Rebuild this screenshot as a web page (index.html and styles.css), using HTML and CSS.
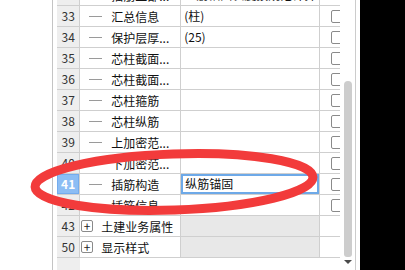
FILE: index.html
```html
<!DOCTYPE html>
<html lang="zh">
<head>
    <meta charset="UTF-8">
    <title>属性编辑器</title>
    <link rel="stylesheet" href="styles.css">
</head>
<body>
    <div class="screen">
        <div class="panel">
            <div class="gutter"></div>
            <div class="pad"></div>
            <div class="grid">
                <div class="row">
                    <div class="num">32</div>
                    <div class="name"><span class="branch"></span>插筋上部...</div>
                    <div class="val">纵筋锚固长度按规范计算...</div>
                    <div class="chk"></div>
                </div>
                <div class="row">
                    <div class="num">33</div>
                    <div class="name"><span class="branch"></span>汇总信息</div>
                    <div class="val">(柱)</div>
                    <div class="chk"><span class="box"></span></div>
                </div>
                <div class="row">
                    <div class="num">34</div>
                    <div class="name"><span class="branch"></span>保护层厚...</div>
                    <div class="val">(25)</div>
                    <div class="chk"><span class="box"></span></div>
                </div>
                <div class="row">
                    <div class="num">35</div>
                    <div class="name"><span class="branch"></span>芯柱截面...</div>
                    <div class="val"></div>
                    <div class="chk"><span class="box"></span></div>
                </div>
                <div class="row">
                    <div class="num">36</div>
                    <div class="name"><span class="branch"></span>芯柱截面...</div>
                    <div class="val"></div>
                    <div class="chk"><span class="box"></span></div>
                </div>
                <div class="row">
                    <div class="num">37</div>
                    <div class="name"><span class="branch"></span>芯柱箍筋</div>
                    <div class="val"></div>
                    <div class="chk"><span class="box"></span></div>
                </div>
                <div class="row">
                    <div class="num">38</div>
                    <div class="name"><span class="branch"></span>芯柱纵筋</div>
                    <div class="val"></div>
                    <div class="chk"><span class="box"></span></div>
                </div>
                <div class="row">
                    <div class="num">39</div>
                    <div class="name"><span class="branch"></span>上加密范...</div>
                    <div class="val"></div>
                    <div class="chk"><span class="box"></span></div>
                </div>
                <div class="row">
                    <div class="num">40</div>
                    <div class="name"><span class="branch"></span>下加密范...</div>
                    <div class="val"></div>
                    <div class="chk"><span class="box"></span></div>
                </div>
                <div class="row">
                    <div class="num selected">41</div>
                    <div class="name"><span class="branch"></span>插筋构造</div>
                    <div class="val edit">纵筋锚固</div>
                    <div class="chk"><span class="box"></span></div>
                </div>
                <div class="row">
                    <div class="num">42</div>
                    <div class="name"><span class="branch"></span>插筋信息</div>
                    <div class="val"></div>
                    <div class="chk"><span class="box"></span></div>
                </div>
                <div class="row">
                    <div class="num">43</div>
                    <div class="name"><span class="plus">+</span>土建业务属性</div>
                    <div class="val shaded"></div>
                    <div class="chk"></div>
                </div>
                <div class="row">
                    <div class="num">50</div>
                    <div class="name"><span class="plus">+</span>显示样式</div>
                    <div class="val shaded"></div>
                    <div class="chk"></div>
                </div>
                <div class="filler">
                    <div class="num"></div>
                </div>
            </div>
            <div class="scroll">
                <div class="thumb"></div>
                <div class="arrow"></div>
            </div>
            <div class="edge"></div>

            <svg class="mark" width="360" height="270" viewBox="0 0 360 270">
                <ellipse cx="174" cy="182" rx="139" ry="28" fill="none" stroke="#f23b3b" stroke-width="9" transform="rotate(-2 174 182)"/>
            </svg>
        </div>
        <div class="outside"></div>
    </div>
</body>
</html>
```

FILE: styles.css
```css
* {
    margin: 0;
    padding: 0;
    box-sizing: border-box;
}

body {
    background: #000;
    font-family: "Noto Sans CJK SC", "Noto Sans", sans-serif;
    font-size: 12px;
    color: #111;
    overflow: hidden;
}

.screen {
    display: flex;
    width: 405px;
    height: 270px;
}

.panel {
    position: relative;
    display: flex;
    width: 360px;
    height: 270px;
    background: #fff;
    overflow: hidden;
}

.outside {
    flex: 1;
    background: #000;
}

.gutter {
    width: 54px;
    border-right: 1px solid #c4c4c4;
}

.pad {
    width: 4px;
}

.grid {
    display: flex;
    flex-direction: column;
    width: 283px;
    height: 285px;
    margin-top: -15px;
}

.row {
    display: flex;
    height: 21px;
    border-bottom: 1px solid #cfcfcf;
}

.num {
    width: 23px;
    border-right: 1px solid #cfcfcf;
    background: #eeeeee;
    color: #333;
    text-align: center;
    line-height: 20px;
}

.num.selected {
    background: #8cbdf4;
    box-shadow: inset 0 0 0 1px #74acee;
    color: #fff;
    font-weight: bold;
}

.name {
    display: flex;
    align-items: center;
    width: 101px;
    border-right: 1px solid #cfcfcf;
    white-space: nowrap;
    overflow: hidden;
}

.branch {
    width: 13px;
    height: 1px;
    margin: 0 9px 0 9px;
    background: #9a9a9a;
}

.plus {
    display: flex;
    align-items: center;
    justify-content: center;
    width: 12px;
    height: 12px;
    margin: 0 8px 0 1px;
    border: 1px solid #8a8a8a;
    border-radius: 2px;
    font-size: 12px;
    line-height: 1;
    color: #222;
}

.val {
    width: 139px;
    padding-left: 3px;
    border-right: 1px solid #cfcfcf;
    line-height: 20px;
    white-space: nowrap;
    overflow: hidden;
}

.val.edit {
    box-shadow: inset 0 0 0 2px #6da9e8;
    padding-left: 4px;
}

.val.shaded {
    background: #e8e8e8;
}

.chk {
    width: 20px;
    overflow: hidden;
}

.box {
    display: block;
    width: 14px;
    height: 13px;
    margin: 4px 0 0 11px;
    border: 1px solid #8a8a8a;
    border-radius: 2px;
}

.filler {
    flex: 1;
    display: flex;
}

.filler .num {
    border-right: none;
}

.scroll {
    display: flex;
    flex-direction: column;
    align-items: center;
    width: 14px;
    padding-top: 81px;
    margin-left: 1px;
}

.thumb {
    width: 8px;
    height: 176px;
    border-radius: 4px 4px 3px 3px;
    background: #cdcdcd;
}

.arrow {
    width: 0;
    height: 0;
    margin-top: 3px;
    border-left: 4px solid transparent;
    border-right: 4px solid transparent;
    border-top: 4px solid #4a4a4a;
}

.edge {
    width: 1px;
    background: #cccccc;
    margin-right: 4px;
}

.mark {
    position: absolute;
    top: 0;
    left: 0;
    pointer-events: none;
}
```
